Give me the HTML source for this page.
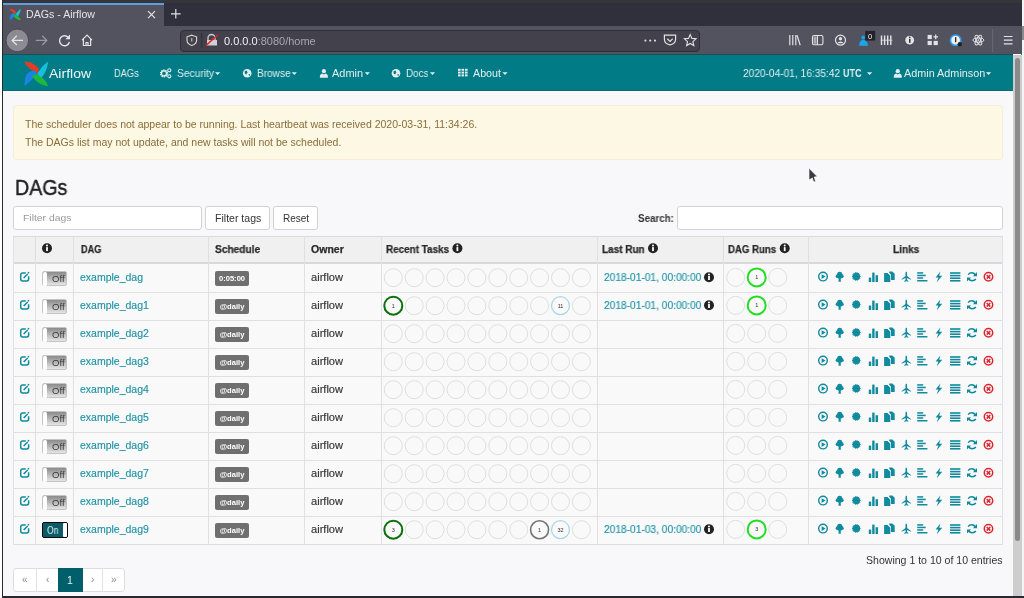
<!DOCTYPE html><html><head><meta charset="utf-8"><style>
*{box-sizing:border-box;margin:0;padding:0}
html,body{width:1024px;height:598px;overflow:hidden;background:#fff;font-family:"Liberation Sans",sans-serif;position:relative}
.a{position:absolute}
.nav{position:absolute;color:#e2eff1;font-size:10.5px;line-height:12px;top:67px;white-space:nowrap}
.alert{left:13px;top:105px;width:990px;height:55px;background:#fcf8e3;border:1px solid #f7eed5;border-radius:3px}
.alert p{position:absolute;left:11px;font-size:10.5px;color:#8a6d3b;line-height:12px;white-space:nowrap}
.input{background:#fff;border:1px solid #d2d2d4;border-radius:3px}
.btn{background:#fff;border:1px solid #d2d2d4;border-radius:3px;font-size:10.5px;color:#333;text-align:center;line-height:22px}
.hd{position:absolute;font-weight:bold;color:#333;font-size:9.9px;line-height:12px;top:244px;white-space:nowrap}
.t{position:absolute;font-size:10.5px;line-height:12px;white-space:nowrap}
svg{position:absolute;overflow:visible}
.a,.t,.nav,.hd,.alert p,.btn{will-change:transform}
</style></head><body>
<div class="a" style="left:1022px;top:0;width:2px;height:598px;background:#f4f4f4"></div>
<div class="a" style="left:1022px;top:26px;width:2px;height:14px;background:#8a8a90"></div>
<div class="a" style="left:1021px;top:54px;width:1px;height:542px;background:#6a6a6e"></div>
<div class="a" style="left:2px;top:0;width:1px;height:598px;background:#2a2a2e"></div>
<div class="a" style="left:3px;top:0;width:1019px;height:3px;background:#36353b"></div>
<div class="a" style="left:3px;top:3px;width:1019px;height:23px;background:#30303c"></div>
<div class="a" style="left:3px;top:3px;width:161px;height:23px;background:#53535f;border-top:2px solid #5b9fe0"></div>
<div class="a" style="left:3px;top:26px;width:1019px;height:28px;background:#53535f"></div>
<div class="a" style="left:180px;top:29.5px;width:520px;height:21.5px;background:#42414c;border:1px solid #2f2e37;border-radius:4px"></div>
<div class="a" style="left:3px;top:54px;width:1010px;height:37px;background:#017b86;border-top:1px solid #1f4c59;border-bottom:1px solid #0c6a73"></div>
<div class="a" style="left:3px;top:91px;width:1010px;height:505px;background:#f8f8fa"></div>
<div class="a" style="left:1013px;top:55px;width:9px;height:541px;background:#cdcdcd"></div>
<div class="a" style="left:1015px;top:58px;width:5px;height:483px;background:#8a8a8a;border-radius:3px"></div>
<div class="a" style="left:2px;top:596px;width:1022px;height:2px;background:#2a2a2e"></div>
<div class="t" style="left:25.90px;top:10.10px;font-size:10.4px;line-height:10.4px;color:#e4e4e8;transform:scaleX(1.0214);transform-origin:0 0;">DAGs - Airflow</div>
<div class="t" style="left:223.50px;top:36.50px;font-size:10.4px;line-height:10.4px;color:#f0f0f4;transform:scaleX(1.0582);transform-origin:0 0;">0.0.0.0<span style="color:#a8a8b0">:8080/home</span></div>
<div class="t" style="left:49.20px;top:67.53px;font-size:12.6px;line-height:12.6px;color:#eef8f8;transform:scaleX(1.1149);transform-origin:0 0;">Airflow</div>
<div class="t" style="left:113.60px;top:68.11px;font-size:10.5px;line-height:10.5px;color:#e2eff1;transform:scaleX(0.8857);transform-origin:0 0;">DAGs</div>
<div class="t" style="left:176.70px;top:68.11px;font-size:10.5px;line-height:10.5px;color:#e2eff1;transform:scaleX(0.9776);transform-origin:0 0;">Security</div>
<div class="t" style="left:257.00px;top:68.11px;font-size:10.5px;line-height:10.5px;color:#e2eff1;transform:scaleX(0.9600);transform-origin:0 0;">Browse</div>
<div class="t" style="left:332.20px;top:68.11px;font-size:10.5px;line-height:10.5px;color:#e2eff1;transform:scaleX(1.0454);transform-origin:0 0;">Admin</div>
<div class="t" style="left:406.30px;top:68.11px;font-size:10.5px;line-height:10.5px;color:#e2eff1;transform:scaleX(0.9372);transform-origin:0 0;">Docs</div>
<div class="t" style="left:473.00px;top:68.11px;font-size:10.5px;line-height:10.5px;color:#e2eff1;transform:scaleX(1.0200);transform-origin:0 0;">About</div>
<div class="t" style="left:742.90px;top:68.11px;font-size:10.5px;line-height:10.5px;color:#e2eff1;transform:scaleX(0.9671);transform-origin:0 0;">2020-04-01, 16:35:42</div>
<div class="t" style="left:903.70px;top:68.11px;font-size:10.5px;line-height:10.5px;color:#e2eff1;transform:scaleX(1.0317);transform-origin:0 0;">Admin Adminson</div>
<div class="t" style="left:843.40px;top:68.11px;font-size:10.5px;line-height:10.5px;color:#e2eff1;font-weight:bold;transform:scaleX(0.8611);transform-origin:0 0;">UTC</div>
<div class="a alert"></div>
<div class="t" style="left:24.80px;top:118.71px;font-size:10.5px;line-height:10.5px;color:#8a6d3b;">The scheduler does not appear to be running. Last heartbeat was received 2020-03-31, 11:34:26.</div>
<div class="t" style="left:24.80px;top:136.71px;font-size:10.5px;line-height:10.5px;color:#8a6d3b;">The DAGs list may not update, and new tasks will not be scheduled.</div>
<div class="t" style="left:14.60px;top:178.38px;font-size:21.4px;line-height:21.4px;color:#222;transform:scaleX(0.9185);transform-origin:0 0;-webkit-text-stroke:0.45px #222;">DAGs</div>
<div class="a input" style="left:13px;top:206px;width:189px;height:24px"></div>
<div class="t" style="left:22.90px;top:213.20px;font-size:9.8px;line-height:9.8px;color:#999;transform:scaleX(1.0579);transform-origin:0 0;">Filter dags</div>
<div class="a btn" style="left:205px;top:206px;width:65px;height:24px"></div>
<div class="t" style="left:214.60px;top:214.23px;font-size:10px;line-height:10px;color:#333;transform:scaleX(1.0547);transform-origin:0 0;">Filter tags</div>
<div class="a btn" style="left:273px;top:206px;width:45px;height:24px"></div>
<div class="t" style="left:282.80px;top:214.23px;font-size:10px;line-height:10px;color:#333;transform:scaleX(0.9847);transform-origin:0 0;">Reset</div>
<div class="t" style="left:637.70px;top:213.73px;font-size:10px;line-height:10px;color:#333;font-weight:bold;transform:scaleX(0.9782);transform-origin:0 0;">Search:</div>
<div class="a input" style="left:677px;top:206px;width:326px;height:24px"></div>
<div class="a" style="left:13px;top:236px;width:990px;height:27px;background:#f1f0f1"></div>
<div class="a" style="left:13px;top:263px;width:990px;height:282px;background:#f9f9fa"></div>
<div class="a" style="left:13px;top:236px;width:990px;height:1px;background:#dcdcde"></div>
<div class="a" style="left:13px;top:262px;width:990px;height:2px;background:#d8d8da"></div>
<div class="a" style="left:13px;top:292px;width:990px;height:1px;background:#e0e0e2"></div>
<div class="a" style="left:13px;top:320px;width:990px;height:1px;background:#e0e0e2"></div>
<div class="a" style="left:13px;top:348px;width:990px;height:1px;background:#e0e0e2"></div>
<div class="a" style="left:13px;top:376px;width:990px;height:1px;background:#e0e0e2"></div>
<div class="a" style="left:13px;top:404px;width:990px;height:1px;background:#e0e0e2"></div>
<div class="a" style="left:13px;top:432px;width:990px;height:1px;background:#e0e0e2"></div>
<div class="a" style="left:13px;top:460px;width:990px;height:1px;background:#e0e0e2"></div>
<div class="a" style="left:13px;top:488px;width:990px;height:1px;background:#e0e0e2"></div>
<div class="a" style="left:13px;top:516px;width:990px;height:1px;background:#e0e0e2"></div>
<div class="a" style="left:13px;top:544px;width:990px;height:1px;background:#dcdcde"></div>
<div class="a" style="left:13px;top:236px;width:1px;height:309px;background:#e0e0e2"></div>
<div class="a" style="left:35px;top:236px;width:1px;height:309px;background:#e0e0e2"></div>
<div class="a" style="left:73px;top:236px;width:1px;height:309px;background:#e0e0e2"></div>
<div class="a" style="left:208px;top:236px;width:1px;height:309px;background:#e0e0e2"></div>
<div class="a" style="left:304px;top:236px;width:1px;height:309px;background:#e0e0e2"></div>
<div class="a" style="left:381px;top:236px;width:1px;height:309px;background:#e0e0e2"></div>
<div class="a" style="left:597px;top:236px;width:1px;height:309px;background:#e0e0e2"></div>
<div class="a" style="left:723px;top:236px;width:1px;height:309px;background:#e0e0e2"></div>
<div class="a" style="left:808px;top:236px;width:1px;height:309px;background:#e0e0e2"></div>
<div class="a" style="left:1002px;top:236px;width:1px;height:309px;background:#e0e0e2"></div>
<div class="t" style="left:80.60px;top:245.10px;font-size:10.4px;line-height:10.4px;color:#2a2a2a;font-weight:bold;transform:scaleX(0.8831);transform-origin:0 0;-webkit-text-stroke:0.25px #2a2a2a;">DAG</div>
<div class="t" style="left:214.80px;top:245.10px;font-size:10.4px;line-height:10.4px;color:#2a2a2a;font-weight:bold;transform:scaleX(0.9773);transform-origin:0 0;-webkit-text-stroke:0.25px #2a2a2a;">Schedule</div>
<div class="t" style="left:311.00px;top:245.10px;font-size:10.4px;line-height:10.4px;color:#2a2a2a;font-weight:bold;transform:scaleX(1.0139);transform-origin:0 0;-webkit-text-stroke:0.25px #2a2a2a;">Owner</div>
<div class="t" style="left:385.70px;top:245.10px;font-size:10.4px;line-height:10.4px;color:#2a2a2a;font-weight:bold;transform:scaleX(0.9517);transform-origin:0 0;-webkit-text-stroke:0.25px #2a2a2a;">Recent Tasks</div>
<div class="t" style="left:602.00px;top:245.10px;font-size:10.4px;line-height:10.4px;color:#2a2a2a;font-weight:bold;transform:scaleX(0.9596);transform-origin:0 0;-webkit-text-stroke:0.25px #2a2a2a;">Last Run</div>
<div class="t" style="left:728.40px;top:245.10px;font-size:10.4px;line-height:10.4px;color:#2a2a2a;font-weight:bold;transform:scaleX(0.9250);transform-origin:0 0;-webkit-text-stroke:0.25px #2a2a2a;">DAG Runs</div>
<div class="t" style="left:892.70px;top:245.10px;font-size:10.4px;line-height:10.4px;color:#2a2a2a;font-weight:bold;transform:scaleX(0.9724);transform-origin:0 0;-webkit-text-stroke:0.25px #2a2a2a;">Links</div>
<div class="t" style="left:79.70px;top:271.91px;font-size:10.5px;line-height:10.5px;color:#1f93a4;-webkit-text-stroke:0.15px #1f93a4;">example_dag</div>
<div class="t" style="left:310.90px;top:271.91px;font-size:10.5px;line-height:10.5px;color:#333;transform:scaleX(1.0559);transform-origin:0 0;-webkit-text-stroke:0.15px #333;">airflow</div>
<div class="a" style="left:215px;top:271px;width:34px;height:15px;background:#6f6f6f;border-radius:2px;color:#fff;font-weight:bold;font-size:7.6px;line-height:15px;text-align:center">0:05:00</div>
<div class="a" style="left:42px;top:271px;width:25px;height:15px;background:linear-gradient(#8a8a8a,#b4b4b4 45%,#e4e4e4);border:1px solid #c4c4c4;border-radius:2px"></div>
<div class="a" style="left:42.5px;top:271.5px;width:4px;height:14px;background:#fff;border-radius:1.5px"></div>
<div class="t" style="left:52.40px;top:275.21px;font-size:9.2px;line-height:9.2px;color:#3a3a3a;transform:scaleX(1.0370);transform-origin:0 0;">Off</div>
<div class="t" style="left:604.00px;top:272.11px;font-size:10.5px;line-height:10.5px;color:#1f93a4;transform:scaleX(0.9701);transform-origin:0 0;-webkit-text-stroke:0.15px #1f93a4;">2018-01-01, 00:00:00</div>
<div class="t" style="left:79.70px;top:299.91px;font-size:10.5px;line-height:10.5px;color:#1f93a4;-webkit-text-stroke:0.15px #1f93a4;">example_dag1</div>
<div class="t" style="left:310.90px;top:299.91px;font-size:10.5px;line-height:10.5px;color:#333;transform:scaleX(1.0559);transform-origin:0 0;-webkit-text-stroke:0.15px #333;">airflow</div>
<div class="a" style="left:215px;top:299px;width:34px;height:15px;background:#6f6f6f;border-radius:2px;color:#fff;font-weight:bold;font-size:7.6px;line-height:15px;text-align:center">@daily</div>
<div class="a" style="left:42px;top:299px;width:25px;height:15px;background:linear-gradient(#8a8a8a,#b4b4b4 45%,#e4e4e4);border:1px solid #c4c4c4;border-radius:2px"></div>
<div class="a" style="left:42.5px;top:299.5px;width:4px;height:14px;background:#fff;border-radius:1.5px"></div>
<div class="t" style="left:52.40px;top:303.21px;font-size:9.2px;line-height:9.2px;color:#3a3a3a;transform:scaleX(1.0370);transform-origin:0 0;">Off</div>
<div class="t" style="left:604.00px;top:300.11px;font-size:10.5px;line-height:10.5px;color:#1f93a4;transform:scaleX(0.9701);transform-origin:0 0;-webkit-text-stroke:0.15px #1f93a4;">2018-01-01, 00:00:00</div>
<div class="t" style="left:79.70px;top:327.91px;font-size:10.5px;line-height:10.5px;color:#1f93a4;-webkit-text-stroke:0.15px #1f93a4;">example_dag2</div>
<div class="t" style="left:310.90px;top:327.91px;font-size:10.5px;line-height:10.5px;color:#333;transform:scaleX(1.0559);transform-origin:0 0;-webkit-text-stroke:0.15px #333;">airflow</div>
<div class="a" style="left:215px;top:327px;width:34px;height:15px;background:#6f6f6f;border-radius:2px;color:#fff;font-weight:bold;font-size:7.6px;line-height:15px;text-align:center">@daily</div>
<div class="a" style="left:42px;top:327px;width:25px;height:15px;background:linear-gradient(#8a8a8a,#b4b4b4 45%,#e4e4e4);border:1px solid #c4c4c4;border-radius:2px"></div>
<div class="a" style="left:42.5px;top:327.5px;width:4px;height:14px;background:#fff;border-radius:1.5px"></div>
<div class="t" style="left:52.40px;top:331.21px;font-size:9.2px;line-height:9.2px;color:#3a3a3a;transform:scaleX(1.0370);transform-origin:0 0;">Off</div>
<div class="t" style="left:79.70px;top:355.91px;font-size:10.5px;line-height:10.5px;color:#1f93a4;-webkit-text-stroke:0.15px #1f93a4;">example_dag3</div>
<div class="t" style="left:310.90px;top:355.91px;font-size:10.5px;line-height:10.5px;color:#333;transform:scaleX(1.0559);transform-origin:0 0;-webkit-text-stroke:0.15px #333;">airflow</div>
<div class="a" style="left:215px;top:355px;width:34px;height:15px;background:#6f6f6f;border-radius:2px;color:#fff;font-weight:bold;font-size:7.6px;line-height:15px;text-align:center">@daily</div>
<div class="a" style="left:42px;top:355px;width:25px;height:15px;background:linear-gradient(#8a8a8a,#b4b4b4 45%,#e4e4e4);border:1px solid #c4c4c4;border-radius:2px"></div>
<div class="a" style="left:42.5px;top:355.5px;width:4px;height:14px;background:#fff;border-radius:1.5px"></div>
<div class="t" style="left:52.40px;top:359.21px;font-size:9.2px;line-height:9.2px;color:#3a3a3a;transform:scaleX(1.0370);transform-origin:0 0;">Off</div>
<div class="t" style="left:79.70px;top:383.91px;font-size:10.5px;line-height:10.5px;color:#1f93a4;-webkit-text-stroke:0.15px #1f93a4;">example_dag4</div>
<div class="t" style="left:310.90px;top:383.91px;font-size:10.5px;line-height:10.5px;color:#333;transform:scaleX(1.0559);transform-origin:0 0;-webkit-text-stroke:0.15px #333;">airflow</div>
<div class="a" style="left:215px;top:383px;width:34px;height:15px;background:#6f6f6f;border-radius:2px;color:#fff;font-weight:bold;font-size:7.6px;line-height:15px;text-align:center">@daily</div>
<div class="a" style="left:42px;top:383px;width:25px;height:15px;background:linear-gradient(#8a8a8a,#b4b4b4 45%,#e4e4e4);border:1px solid #c4c4c4;border-radius:2px"></div>
<div class="a" style="left:42.5px;top:383.5px;width:4px;height:14px;background:#fff;border-radius:1.5px"></div>
<div class="t" style="left:52.40px;top:387.21px;font-size:9.2px;line-height:9.2px;color:#3a3a3a;transform:scaleX(1.0370);transform-origin:0 0;">Off</div>
<div class="t" style="left:79.70px;top:411.91px;font-size:10.5px;line-height:10.5px;color:#1f93a4;-webkit-text-stroke:0.15px #1f93a4;">example_dag5</div>
<div class="t" style="left:310.90px;top:411.91px;font-size:10.5px;line-height:10.5px;color:#333;transform:scaleX(1.0559);transform-origin:0 0;-webkit-text-stroke:0.15px #333;">airflow</div>
<div class="a" style="left:215px;top:411px;width:34px;height:15px;background:#6f6f6f;border-radius:2px;color:#fff;font-weight:bold;font-size:7.6px;line-height:15px;text-align:center">@daily</div>
<div class="a" style="left:42px;top:411px;width:25px;height:15px;background:linear-gradient(#8a8a8a,#b4b4b4 45%,#e4e4e4);border:1px solid #c4c4c4;border-radius:2px"></div>
<div class="a" style="left:42.5px;top:411.5px;width:4px;height:14px;background:#fff;border-radius:1.5px"></div>
<div class="t" style="left:52.40px;top:415.21px;font-size:9.2px;line-height:9.2px;color:#3a3a3a;transform:scaleX(1.0370);transform-origin:0 0;">Off</div>
<div class="t" style="left:79.70px;top:439.91px;font-size:10.5px;line-height:10.5px;color:#1f93a4;-webkit-text-stroke:0.15px #1f93a4;">example_dag6</div>
<div class="t" style="left:310.90px;top:439.91px;font-size:10.5px;line-height:10.5px;color:#333;transform:scaleX(1.0559);transform-origin:0 0;-webkit-text-stroke:0.15px #333;">airflow</div>
<div class="a" style="left:215px;top:439px;width:34px;height:15px;background:#6f6f6f;border-radius:2px;color:#fff;font-weight:bold;font-size:7.6px;line-height:15px;text-align:center">@daily</div>
<div class="a" style="left:42px;top:439px;width:25px;height:15px;background:linear-gradient(#8a8a8a,#b4b4b4 45%,#e4e4e4);border:1px solid #c4c4c4;border-radius:2px"></div>
<div class="a" style="left:42.5px;top:439.5px;width:4px;height:14px;background:#fff;border-radius:1.5px"></div>
<div class="t" style="left:52.40px;top:443.21px;font-size:9.2px;line-height:9.2px;color:#3a3a3a;transform:scaleX(1.0370);transform-origin:0 0;">Off</div>
<div class="t" style="left:79.70px;top:467.91px;font-size:10.5px;line-height:10.5px;color:#1f93a4;-webkit-text-stroke:0.15px #1f93a4;">example_dag7</div>
<div class="t" style="left:310.90px;top:467.91px;font-size:10.5px;line-height:10.5px;color:#333;transform:scaleX(1.0559);transform-origin:0 0;-webkit-text-stroke:0.15px #333;">airflow</div>
<div class="a" style="left:215px;top:467px;width:34px;height:15px;background:#6f6f6f;border-radius:2px;color:#fff;font-weight:bold;font-size:7.6px;line-height:15px;text-align:center">@daily</div>
<div class="a" style="left:42px;top:467px;width:25px;height:15px;background:linear-gradient(#8a8a8a,#b4b4b4 45%,#e4e4e4);border:1px solid #c4c4c4;border-radius:2px"></div>
<div class="a" style="left:42.5px;top:467.5px;width:4px;height:14px;background:#fff;border-radius:1.5px"></div>
<div class="t" style="left:52.40px;top:471.21px;font-size:9.2px;line-height:9.2px;color:#3a3a3a;transform:scaleX(1.0370);transform-origin:0 0;">Off</div>
<div class="t" style="left:79.70px;top:495.91px;font-size:10.5px;line-height:10.5px;color:#1f93a4;-webkit-text-stroke:0.15px #1f93a4;">example_dag8</div>
<div class="t" style="left:310.90px;top:495.91px;font-size:10.5px;line-height:10.5px;color:#333;transform:scaleX(1.0559);transform-origin:0 0;-webkit-text-stroke:0.15px #333;">airflow</div>
<div class="a" style="left:215px;top:495px;width:34px;height:15px;background:#6f6f6f;border-radius:2px;color:#fff;font-weight:bold;font-size:7.6px;line-height:15px;text-align:center">@daily</div>
<div class="a" style="left:42px;top:495px;width:25px;height:15px;background:linear-gradient(#8a8a8a,#b4b4b4 45%,#e4e4e4);border:1px solid #c4c4c4;border-radius:2px"></div>
<div class="a" style="left:42.5px;top:495.5px;width:4px;height:14px;background:#fff;border-radius:1.5px"></div>
<div class="t" style="left:52.40px;top:499.21px;font-size:9.2px;line-height:9.2px;color:#3a3a3a;transform:scaleX(1.0370);transform-origin:0 0;">Off</div>
<div class="t" style="left:79.70px;top:523.91px;font-size:10.5px;line-height:10.5px;color:#1f93a4;-webkit-text-stroke:0.15px #1f93a4;">example_dag9</div>
<div class="t" style="left:310.90px;top:523.91px;font-size:10.5px;line-height:10.5px;color:#333;transform:scaleX(1.0559);transform-origin:0 0;-webkit-text-stroke:0.15px #333;">airflow</div>
<div class="a" style="left:215px;top:523px;width:34px;height:15px;background:#6f6f6f;border-radius:2px;color:#fff;font-weight:bold;font-size:7.6px;line-height:15px;text-align:center">@daily</div>
<div class="a" style="left:42px;top:522px;width:26px;height:16px;background:#0c5c68;border:1px solid #0a0a0a;border-radius:2px"></div>
<div class="a" style="left:62.5px;top:523px;width:4px;height:14px;background:#fff;border-radius:1px"></div>
<div class="t" style="left:47.20px;top:525.93px;font-size:10px;line-height:10px;color:#d4f0f2;transform:scaleX(0.8614);transform-origin:0 0;">On</div>
<div class="t" style="left:604.00px;top:524.11px;font-size:10.5px;line-height:10.5px;color:#1f93a4;transform:scaleX(0.9701);transform-origin:0 0;-webkit-text-stroke:0.15px #1f93a4;">2018-01-03, 00:00:00</div>
<div class="t" style="left:866.20px;top:554.81px;font-size:10.5px;line-height:10.5px;color:#333;transform:scaleX(1.0044);transform-origin:0 0;">Showing 1 to 10 of 10 entries</div>
<div class="a" style="left:13px;top:568px;width:112px;height:24px;background:#fff;border:1px solid #dddddf;border-radius:3px"></div>
<div class="a" style="left:36px;top:568px;width:1px;height:24px;background:#e2e2e4"></div>
<div class="a" style="left:102px;top:568px;width:1px;height:24px;background:#e2e2e4"></div>
<div class="a" style="left:57.5px;top:568px;width:24.6px;height:24px;background:#005f6b"></div>
<div class="t" style="left:22.3px;top:574px;color:#888;font-size:10px">&laquo;</div>
<div class="t" style="left:45.5px;top:574px;color:#888;font-size:10px">&lsaquo;</div>
<div class="t" style="left:66.5px;top:574px;color:#e6f0f0;font-size:10.5px">1</div>
<div class="t" style="left:90.5px;top:574px;color:#888;font-size:10px">&rsaquo;</div>
<div class="t" style="left:111px;top:574px;color:#888;font-size:10px">&raquo;</div>
<svg width="1024" height="598" style="left:0;top:0"><g transform="translate(9.5,8.5) scale(0.47) translate(-24,-61)"><path d="M24.3 61.5L31 62.4Q35.5 64.2 39 68.8L38 73.5Q33 71.5 29 68Q25.5 65 24.3 61.5Z" fill="#e43b26"/><path d="M48.3 61.5Q47.5 66 46 70.5Q44 75 40.8 78.6L37.2 74Q39 70.5 42.5 66.5Q45.5 63.5 48.3 61.5Z" fill="#17c0da"/><path d="M24.5 85.8Q24.2 81 25.5 77Q27 73 30 71.5L35.2 70.6L36.6 73.2Q34 77.5 30.5 81Q27.5 84 24.5 85.8Z" fill="#1a84e6"/><path d="M48.2 86.2Q43 85.5 39.5 83.5Q35.5 81 32 76.2L36.2 74L43.2 78.6Q46.5 81.5 48.2 86.2Z" fill="#1cb840"/></g><path d="M148 11.2L155 18.2M155 11.2L148 18.2" stroke="#e2e2e8" stroke-width="1.2"/><path d="M175.8 9V18.6M171 13.8H180.6" stroke="#e2e2e8" stroke-width="1.2"/><circle cx="17.3" cy="40.4" r="11.3" fill="#8c8b94" stroke="#3f3e48" stroke-width="0.8"/><path d="M23 40.4H12.4M16.8 35.8L12.2 40.4L16.8 45" fill="none" stroke="#e2e2e8" stroke-width="1.3"/><path d="M35.8 40.4H46.6M42.2 35.8L46.8 40.4L42.2 45" fill="none" stroke="#9a99a2" stroke-width="1.3"/><path d="M68.6 37.8A5 5 0 1 0 69.4 42" fill="none" stroke="#e2e2e8" stroke-width="1.4"/><path d="M70 34.5V39.2H65.3Z" fill="#e2e2e8"/><path d="M82 40.2L87 35.2L92 40.2M83.4 39V45.5H90.6V39M86 45.5V42.5H88V45.5" fill="none" stroke="#e2e2e8" stroke-width="1.2"/><path d="M191.8 35.2L196.6 36.8V40.2C196.6 43 194.6 44.6 191.8 45.6C189 44.6 187 43 187 40.2V36.8Z" fill="none" stroke="#d8d8dc" stroke-width="1.1"/><rect x="191.3" y="38" width="1" height="3.6" fill="#d8d8dc"/><rect x="201.2" y="33" width="1" height="15" fill="#2f2e38"/><path d="M208 40V38A3.5 3.5 0 0 1 215 38V40" fill="none" stroke="#cfcfd6" stroke-width="1.3"/><rect x="207" y="40" width="10" height="5.5" fill="#cfcfd6"/><path d="M206 45.5L217.5 35" stroke="#e0262a" stroke-width="1.6"/><circle cx="645.4" cy="40.6" r="1.1" fill="#d8d8dc"/><circle cx="650.2" cy="40.6" r="1.1" fill="#d8d8dc"/><circle cx="655" cy="40.6" r="1.1" fill="#d8d8dc"/><path d="M664.4 35.2H675.6V39.2A5.6 5.6 0 0 1 664.4 39.2Z" fill="none" stroke="#e2e2e8" stroke-width="1.2"/><path d="M667.3 38.8L670 41.4L672.7 38.8" fill="none" stroke="#e2e2e8" stroke-width="1.2"/><path d="M690.2 34.6L691.9 38.4L696 38.8L692.9 41.6L693.8 45.6L690.2 43.5L686.6 45.6L687.5 41.6L684.4 38.8L688.5 38.4Z" fill="none" stroke="#e2e2e8" stroke-width="1.1"/><path d="M789.8 35V45.3M792.8 35V45.3M795.8 35V45.3M797 35.2L800.2 45.3" stroke="#e2e2e8" stroke-width="1.2"/><rect x="812.5" y="35.5" width="10.4" height="9.3" rx="1.5" fill="none" stroke="#e2e2e8" stroke-width="1.1"/><path d="M817.4 35.5V44.8" stroke="#e2e2e8" stroke-width="1.1"/><rect x="813.5" y="36.5" width="3" height="7.3" fill="#aaaab0"/><circle cx="840.5" cy="40.2" r="5" fill="none" stroke="#e2e2e8" stroke-width="1.2"/><circle cx="840.5" cy="38.8" r="1.7" fill="#e2e2e8"/><path d="M837.3 43.2A3.4 2.6 0 0 1 843.7 43.2" fill="#e2e2e8"/><circle cx="863.3" cy="37.6" r="2" fill="#1c9ef0"/><path d="M859.2 45.8Q859.2 40.2 863.3 39.8Q867.6 40.2 868 45.8Z" fill="#1aa6e8"/><rect x="865.2" y="30.9" width="10" height="9.7" fill="#24232c"/><text x="870.2" y="38.8" font-size="7.5" text-anchor="middle" fill="#f0f0f0" font-family="Liberation Sans">0</text><path d="M881.5 35.6V45M884.6 35.6V45M887.7 35.6V45M890.8 35.6V45" stroke="#e2e2e8" stroke-width="1.4"/><path d="M880.7 40.2H892.4" stroke="#e2e2e8" stroke-width="0.8"/><circle cx="909.7" cy="40.2" r="4.8" fill="#e2e2e8" stroke="#2d2c35" stroke-width="0.6"/><rect x="909" y="38.8" width="1.5" height="4" fill="#333"/><circle cx="909.8" cy="37.4" r="0.8" fill="#333"/><rect x="927.6" y="34.9" width="4.2" height="4.2" fill="#e2e2e8"/><rect x="927.6" y="40.9" width="4.2" height="4.2" fill="#e2e2e8"/><rect x="933.6" y="40.9" width="4.2" height="4.2" fill="#e2e2e8"/><path d="M935.7 34.6V39.2M933.4 36.9H938" stroke="#e2e2e8" stroke-width="1.3"/><circle cx="955.6" cy="40.2" r="5.2" fill="#f0f0f0" stroke="#2c9ef0" stroke-width="1.6"/><rect x="955" y="37.2" width="1.3" height="5" fill="#222"/><circle cx="959.8" cy="44.2" r="2.2" fill="#222"/><g fill="none" stroke="#e2e2e8" stroke-width="1"><ellipse cx="978.4" cy="40.1" rx="5.4" ry="2.1"/><ellipse cx="978.4" cy="40.1" rx="5.4" ry="2.1" transform="rotate(60 978.4 40.1)"/><ellipse cx="978.4" cy="40.1" rx="5.4" ry="2.1" transform="rotate(-60 978.4 40.1)"/></g><circle cx="978.4" cy="40.1" r="0.9" fill="#e2e2e8"/><rect x="992.2" y="29" width="1" height="23" fill="#6a6974"/><path d="M1003.8 36.5H1012.5M1003.8 40.2H1012.5M1003.8 43.9H1012.5" stroke="#e2e2e8" stroke-width="1.2"/><g transform="translate(24,61) scale(1.0) translate(-24,-61)"><path d="M24.3 61.5L31 62.4Q35.5 64.2 39 68.8L38 73.5Q33 71.5 29 68Q25.5 65 24.3 61.5Z" fill="#e43b26"/><path d="M48.3 61.5Q47.5 66 46 70.5Q44 75 40.8 78.6L37.2 74Q39 70.5 42.5 66.5Q45.5 63.5 48.3 61.5Z" fill="#17c0da"/><path d="M24.5 85.8Q24.2 81 25.5 77Q27 73 30 71.5L35.2 70.6L36.6 73.2Q34 77.5 30.5 81Q27.5 84 24.5 85.8Z" fill="#1a84e6"/><path d="M48.2 86.2Q43 85.5 39.5 83.5Q35.5 81 32 76.2L36.2 74L43.2 78.6Q46.5 81.5 48.2 86.2Z" fill="#1cb840"/></g><circle cx="164" cy="73.4" r="3.2" fill="none" stroke="#e2eff1" stroke-width="1.8" stroke-dasharray="1.2 0.8"/><circle cx="164" cy="73.4" r="2.5" fill="none" stroke="#e2eff1" stroke-width="1.3"/><circle cx="169.3" cy="70.3" r="1.6" fill="none" stroke="#e2eff1" stroke-width="1.1"/><circle cx="169.3" cy="76.3" r="1.6" fill="none" stroke="#e2eff1" stroke-width="1.1"/><circle cx="247.2" cy="73.3" r="4.3" fill="#e2eff1"/><path d="M244.7 71.2L246.6 70.4L247.6 72.6L246.2 74.6L244.79999999999998 73.4Z M248.39999999999998 74.6L250.2 74L249.39999999999998 76.6Z" fill="#017b86"/><circle cx="396" cy="73.3" r="4.3" fill="#e2eff1"/><path d="M393.5 71.2L395.4 70.4L396.4 72.6L395 74.6L393.6 73.4Z M397.2 74.6L399 74L398.2 76.6Z" fill="#017b86"/><circle cx="323.9" cy="71.2" r="2.1" fill="#e2eff1"/><path d="M319.9 77.8V76.2C319.9 74.4 321.4 73.6 322.29999999999995 73.4L323.9 74.6L325.5 73.4C326.4 73.6 327.9 74.4 327.9 76.2V77.8Z" fill="#e2eff1"/><circle cx="897.8" cy="71.2" r="2.1" fill="#e2eff1"/><path d="M893.8 77.8V76.2C893.8 74.4 895.3 73.6 896.1999999999999 73.4L897.8 74.6L899.4 73.4C900.3 73.6 901.8 74.4 901.8 76.2V77.8Z" fill="#e2eff1"/><rect x="458.0" y="68.8" width="2.6" height="2" fill="#e2eff1"/><rect x="461.5" y="68.8" width="2.6" height="2" fill="#e2eff1"/><rect x="465.0" y="68.8" width="2.6" height="2" fill="#e2eff1"/><rect x="458.0" y="71.6" width="2.6" height="2" fill="#e2eff1"/><rect x="461.5" y="71.6" width="2.6" height="2" fill="#e2eff1"/><rect x="465.0" y="71.6" width="2.6" height="2" fill="#e2eff1"/><rect x="458.0" y="74.4" width="2.6" height="2" fill="#e2eff1"/><rect x="461.5" y="74.4" width="2.6" height="2" fill="#e2eff1"/><rect x="465.0" y="74.4" width="2.6" height="2" fill="#e2eff1"/><path d="M215.0 72.2H220.2L217.6 74.9Z" fill="#e2eff1"/><path d="M291.7 72.2H296.90000000000003L294.3 74.9Z" fill="#e2eff1"/><path d="M364.7 72.2H369.90000000000003L367.3 74.9Z" fill="#e2eff1"/><path d="M429.9 72.2H435.1L432.5 74.9Z" fill="#e2eff1"/><path d="M502.4 72.2H507.6L505 74.9Z" fill="#e2eff1"/><path d="M867.0 72.2H872.2L869.6 74.9Z" fill="#e2eff1"/><path d="M985.9 72.2H991.1L988.5 74.9Z" fill="#e2eff1"/></svg>
<svg width="1024" height="598" style="left:0;top:0"><circle cx="47" cy="248.3" r="5" fill="#222"/><rect x="46.1" y="247.10000000000002" width="1.8" height="4" fill="#fff"/><circle cx="47" cy="245.5" r="1" fill="#fff"/><circle cx="457.4" cy="248.3" r="5" fill="#222"/><rect x="456.5" y="247.10000000000002" width="1.8" height="4" fill="#fff"/><circle cx="457.4" cy="245.5" r="1" fill="#fff"/><circle cx="653" cy="248.3" r="5" fill="#222"/><rect x="652.1" y="247.10000000000002" width="1.8" height="4" fill="#fff"/><circle cx="653" cy="245.5" r="1" fill="#fff"/><circle cx="784.7" cy="248.3" r="5" fill="#222"/><rect x="783.8000000000001" y="247.10000000000002" width="1.8" height="4" fill="#fff"/><circle cx="784.7" cy="245.5" r="1" fill="#fff"/><g transform="translate(19.8,271.9) scale(0.92)"><path d="M6.5 1.2H3A2 2 0 0 0 1 3.2V7.8A2 2 0 0 0 3 9.8H7.6A2 2 0 0 0 9.6 7.8V4.6" fill="none" stroke="#108a9d" stroke-width="1.6"/><path d="M4.2 6.6L8.6 2.2" stroke="#108a9d" stroke-width="1.6"/><rect x="8.5" y="0" width="1.7" height="1.7" fill="#108a9d"/></g><circle cx="393.3" cy="277.7" r="9" fill="none" stroke="#dedede" stroke-width="1"/><circle cx="414.2" cy="277.7" r="9" fill="none" stroke="#dedede" stroke-width="1"/><circle cx="435.1" cy="277.7" r="9" fill="none" stroke="#dedede" stroke-width="1"/><circle cx="456.0" cy="277.7" r="9" fill="none" stroke="#dedede" stroke-width="1"/><circle cx="476.9" cy="277.7" r="9" fill="none" stroke="#dedede" stroke-width="1"/><circle cx="497.8" cy="277.7" r="9" fill="none" stroke="#dedede" stroke-width="1"/><circle cx="518.7" cy="277.7" r="9" fill="none" stroke="#dedede" stroke-width="1"/><circle cx="539.6" cy="277.7" r="9" fill="none" stroke="#dedede" stroke-width="1"/><circle cx="560.5" cy="277.7" r="9" fill="none" stroke="#dedede" stroke-width="1"/><circle cx="581.4" cy="277.7" r="9" fill="none" stroke="#dedede" stroke-width="1"/><circle cx="735.7" cy="277.4" r="9" fill="none" stroke="#dedede" stroke-width="1"/><circle cx="756.7" cy="277.4" r="9" fill="none" stroke="#22dd22" stroke-width="2"/><text x="756.7" y="279.4" font-size="5.5" text-anchor="middle" fill="#333" font-family="Liberation Sans">1</text><circle cx="777.7" cy="277.4" r="9" fill="none" stroke="#dedede" stroke-width="1"/><circle cx="709" cy="277.2" r="5" fill="#222"/><rect x="708.1" y="276.0" width="1.8" height="4" fill="#fff"/><circle cx="709" cy="274.4" r="1" fill="#fff"/><g transform="translate(0,271.6)" fill="#108a9d"><circle cx="823" cy="5" r="4.3" fill="none" stroke="#108a9d" stroke-width="1.4"/><path d="M821.6 2.6L825.6 5L821.6 7.4Z"/><circle cx="839.7" cy="2.8" r="2.6"/><circle cx="837.6" cy="4.6" r="1.9"/><circle cx="841.8" cy="4.6" r="1.9"/><circle cx="839.7" cy="5.2" r="2.3"/><path d="M838.8 6.5H840.6L840.9 10.1H838.5Z"/><polygon points="860.90,4.80 859.81,5.60 860.44,6.80 859.11,7.04 859.17,8.40 857.86,8.04 857.32,9.28 856.30,8.40 855.28,9.28 854.74,8.04 853.43,8.40 853.49,7.04 852.16,6.80 852.79,5.60 851.70,4.80 852.79,4.00 852.16,2.80 853.49,2.56 853.43,1.20 854.74,1.56 855.28,0.32 856.30,1.20 857.32,0.32 857.86,1.56 859.17,1.20 859.11,2.56 860.44,2.80 859.81,4.00"/><rect x="868.8" y="6" width="2.4" height="4.4"/><rect x="872.2" y="1" width="2.4" height="9.4"/><rect x="875.6" y="3.6" width="2.4" height="6.8"/><path d="M884.1 1.4H887.6L890.3 4.1V10.3H884.1Z"/><path d="M888.2 1.2L889.6 2.6" stroke="#f9f9fa" stroke-width="0.8"/><path d="M889.2 -0.2H892.3L894.7 2.2V8.4H891V3.2L889.2 1.2Z"/><path d="M906.3 0.2C906.9 0.2 907.1 0.9 907.1 1.6V4.4L910.9 7.3V8.1L907.1 6.5V8.4L908.4 9.5V10.2L906.3 9.6L904.2 10.2V9.5L905.5 8.4V6.5L901.7 8.1V7.3L905.5 4.4V1.6C905.5 0.9 905.7 0.2 906.3 0.2Z"/><rect x="917.2" y="0.6" width="6" height="1.5"/><rect x="917.2" y="3.1" width="8.5" height="1.5"/><rect x="917.2" y="5.6" width="6" height="1.5"/><rect x="917.2" y="8.4" width="10.2" height="1.5"/><path d="M940.4 0L935.6 6H938.4L936.8 10.6L942.2 4.2H939.2Z"/><rect x="950" y="0.6" width="10.4" height="1.6"/><rect x="950" y="3.2" width="10.4" height="1.6"/><rect x="950" y="5.8" width="10.4" height="1.6"/><rect x="950" y="8.4" width="10.4" height="1.6"/><path d="M975.3 3.2A4.3 4.3 0 0 0 968.2 3" fill="none" stroke="#108a9d" stroke-width="1.6"/><path d="M977 0.5V4.6H972.9Z"/><path d="M968.7 7.2A4.3 4.3 0 0 0 975.8 7.4" fill="none" stroke="#108a9d" stroke-width="1.6"/><path d="M967 9.9V5.8H971.1Z"/><circle cx="988.5" cy="5.2" r="4.2" fill="none" stroke="#d9262c" stroke-width="1.5"/><path d="M986.7 3.4L990.3 7M990.3 3.4L986.7 7" stroke="#d9262c" stroke-width="1.5"/></g><g transform="translate(19.8,299.9) scale(0.92)"><path d="M6.5 1.2H3A2 2 0 0 0 1 3.2V7.8A2 2 0 0 0 3 9.8H7.6A2 2 0 0 0 9.6 7.8V4.6" fill="none" stroke="#108a9d" stroke-width="1.6"/><path d="M4.2 6.6L8.6 2.2" stroke="#108a9d" stroke-width="1.6"/><rect x="8.5" y="0" width="1.7" height="1.7" fill="#108a9d"/></g><circle cx="393.3" cy="305.7" r="9" fill="none" stroke="#0b6f0b" stroke-width="2"/><text x="393.3" y="307.7" font-size="5.5" text-anchor="middle" fill="#333" font-family="Liberation Sans">1</text><circle cx="414.2" cy="305.7" r="9" fill="none" stroke="#dedede" stroke-width="1"/><circle cx="435.1" cy="305.7" r="9" fill="none" stroke="#dedede" stroke-width="1"/><circle cx="456.0" cy="305.7" r="9" fill="none" stroke="#dedede" stroke-width="1"/><circle cx="476.9" cy="305.7" r="9" fill="none" stroke="#dedede" stroke-width="1"/><circle cx="497.8" cy="305.7" r="9" fill="none" stroke="#dedede" stroke-width="1"/><circle cx="518.7" cy="305.7" r="9" fill="none" stroke="#dedede" stroke-width="1"/><circle cx="539.6" cy="305.7" r="9" fill="none" stroke="#dedede" stroke-width="1"/><circle cx="560.5" cy="305.7" r="9" fill="none" stroke="#a8d8e6" stroke-width="1.3"/><text x="560.5" y="307.7" font-size="5.5" text-anchor="middle" fill="#333" font-family="Liberation Sans">11</text><circle cx="581.4" cy="305.7" r="9" fill="none" stroke="#dedede" stroke-width="1"/><circle cx="735.7" cy="305.4" r="9" fill="none" stroke="#dedede" stroke-width="1"/><circle cx="756.7" cy="305.4" r="9" fill="none" stroke="#22dd22" stroke-width="2"/><text x="756.7" y="307.4" font-size="5.5" text-anchor="middle" fill="#333" font-family="Liberation Sans">1</text><circle cx="777.7" cy="305.4" r="9" fill="none" stroke="#dedede" stroke-width="1"/><circle cx="709" cy="305.2" r="5" fill="#222"/><rect x="708.1" y="304.0" width="1.8" height="4" fill="#fff"/><circle cx="709" cy="302.4" r="1" fill="#fff"/><g transform="translate(0,299.6)" fill="#108a9d"><circle cx="823" cy="5" r="4.3" fill="none" stroke="#108a9d" stroke-width="1.4"/><path d="M821.6 2.6L825.6 5L821.6 7.4Z"/><circle cx="839.7" cy="2.8" r="2.6"/><circle cx="837.6" cy="4.6" r="1.9"/><circle cx="841.8" cy="4.6" r="1.9"/><circle cx="839.7" cy="5.2" r="2.3"/><path d="M838.8 6.5H840.6L840.9 10.1H838.5Z"/><polygon points="860.90,4.80 859.81,5.60 860.44,6.80 859.11,7.04 859.17,8.40 857.86,8.04 857.32,9.28 856.30,8.40 855.28,9.28 854.74,8.04 853.43,8.40 853.49,7.04 852.16,6.80 852.79,5.60 851.70,4.80 852.79,4.00 852.16,2.80 853.49,2.56 853.43,1.20 854.74,1.56 855.28,0.32 856.30,1.20 857.32,0.32 857.86,1.56 859.17,1.20 859.11,2.56 860.44,2.80 859.81,4.00"/><rect x="868.8" y="6" width="2.4" height="4.4"/><rect x="872.2" y="1" width="2.4" height="9.4"/><rect x="875.6" y="3.6" width="2.4" height="6.8"/><path d="M884.1 1.4H887.6L890.3 4.1V10.3H884.1Z"/><path d="M888.2 1.2L889.6 2.6" stroke="#f9f9fa" stroke-width="0.8"/><path d="M889.2 -0.2H892.3L894.7 2.2V8.4H891V3.2L889.2 1.2Z"/><path d="M906.3 0.2C906.9 0.2 907.1 0.9 907.1 1.6V4.4L910.9 7.3V8.1L907.1 6.5V8.4L908.4 9.5V10.2L906.3 9.6L904.2 10.2V9.5L905.5 8.4V6.5L901.7 8.1V7.3L905.5 4.4V1.6C905.5 0.9 905.7 0.2 906.3 0.2Z"/><rect x="917.2" y="0.6" width="6" height="1.5"/><rect x="917.2" y="3.1" width="8.5" height="1.5"/><rect x="917.2" y="5.6" width="6" height="1.5"/><rect x="917.2" y="8.4" width="10.2" height="1.5"/><path d="M940.4 0L935.6 6H938.4L936.8 10.6L942.2 4.2H939.2Z"/><rect x="950" y="0.6" width="10.4" height="1.6"/><rect x="950" y="3.2" width="10.4" height="1.6"/><rect x="950" y="5.8" width="10.4" height="1.6"/><rect x="950" y="8.4" width="10.4" height="1.6"/><path d="M975.3 3.2A4.3 4.3 0 0 0 968.2 3" fill="none" stroke="#108a9d" stroke-width="1.6"/><path d="M977 0.5V4.6H972.9Z"/><path d="M968.7 7.2A4.3 4.3 0 0 0 975.8 7.4" fill="none" stroke="#108a9d" stroke-width="1.6"/><path d="M967 9.9V5.8H971.1Z"/><circle cx="988.5" cy="5.2" r="4.2" fill="none" stroke="#d9262c" stroke-width="1.5"/><path d="M986.7 3.4L990.3 7M990.3 3.4L986.7 7" stroke="#d9262c" stroke-width="1.5"/></g><g transform="translate(19.8,327.9) scale(0.92)"><path d="M6.5 1.2H3A2 2 0 0 0 1 3.2V7.8A2 2 0 0 0 3 9.8H7.6A2 2 0 0 0 9.6 7.8V4.6" fill="none" stroke="#108a9d" stroke-width="1.6"/><path d="M4.2 6.6L8.6 2.2" stroke="#108a9d" stroke-width="1.6"/><rect x="8.5" y="0" width="1.7" height="1.7" fill="#108a9d"/></g><circle cx="393.3" cy="333.7" r="9" fill="none" stroke="#dedede" stroke-width="1"/><circle cx="414.2" cy="333.7" r="9" fill="none" stroke="#dedede" stroke-width="1"/><circle cx="435.1" cy="333.7" r="9" fill="none" stroke="#dedede" stroke-width="1"/><circle cx="456.0" cy="333.7" r="9" fill="none" stroke="#dedede" stroke-width="1"/><circle cx="476.9" cy="333.7" r="9" fill="none" stroke="#dedede" stroke-width="1"/><circle cx="497.8" cy="333.7" r="9" fill="none" stroke="#dedede" stroke-width="1"/><circle cx="518.7" cy="333.7" r="9" fill="none" stroke="#dedede" stroke-width="1"/><circle cx="539.6" cy="333.7" r="9" fill="none" stroke="#dedede" stroke-width="1"/><circle cx="560.5" cy="333.7" r="9" fill="none" stroke="#dedede" stroke-width="1"/><circle cx="581.4" cy="333.7" r="9" fill="none" stroke="#dedede" stroke-width="1"/><circle cx="735.7" cy="333.4" r="9" fill="none" stroke="#dedede" stroke-width="1"/><circle cx="756.7" cy="333.4" r="9" fill="none" stroke="#dedede" stroke-width="1"/><circle cx="777.7" cy="333.4" r="9" fill="none" stroke="#dedede" stroke-width="1"/><g transform="translate(0,327.6)" fill="#108a9d"><circle cx="823" cy="5" r="4.3" fill="none" stroke="#108a9d" stroke-width="1.4"/><path d="M821.6 2.6L825.6 5L821.6 7.4Z"/><circle cx="839.7" cy="2.8" r="2.6"/><circle cx="837.6" cy="4.6" r="1.9"/><circle cx="841.8" cy="4.6" r="1.9"/><circle cx="839.7" cy="5.2" r="2.3"/><path d="M838.8 6.5H840.6L840.9 10.1H838.5Z"/><polygon points="860.90,4.80 859.81,5.60 860.44,6.80 859.11,7.04 859.17,8.40 857.86,8.04 857.32,9.28 856.30,8.40 855.28,9.28 854.74,8.04 853.43,8.40 853.49,7.04 852.16,6.80 852.79,5.60 851.70,4.80 852.79,4.00 852.16,2.80 853.49,2.56 853.43,1.20 854.74,1.56 855.28,0.32 856.30,1.20 857.32,0.32 857.86,1.56 859.17,1.20 859.11,2.56 860.44,2.80 859.81,4.00"/><rect x="868.8" y="6" width="2.4" height="4.4"/><rect x="872.2" y="1" width="2.4" height="9.4"/><rect x="875.6" y="3.6" width="2.4" height="6.8"/><path d="M884.1 1.4H887.6L890.3 4.1V10.3H884.1Z"/><path d="M888.2 1.2L889.6 2.6" stroke="#f9f9fa" stroke-width="0.8"/><path d="M889.2 -0.2H892.3L894.7 2.2V8.4H891V3.2L889.2 1.2Z"/><path d="M906.3 0.2C906.9 0.2 907.1 0.9 907.1 1.6V4.4L910.9 7.3V8.1L907.1 6.5V8.4L908.4 9.5V10.2L906.3 9.6L904.2 10.2V9.5L905.5 8.4V6.5L901.7 8.1V7.3L905.5 4.4V1.6C905.5 0.9 905.7 0.2 906.3 0.2Z"/><rect x="917.2" y="0.6" width="6" height="1.5"/><rect x="917.2" y="3.1" width="8.5" height="1.5"/><rect x="917.2" y="5.6" width="6" height="1.5"/><rect x="917.2" y="8.4" width="10.2" height="1.5"/><path d="M940.4 0L935.6 6H938.4L936.8 10.6L942.2 4.2H939.2Z"/><rect x="950" y="0.6" width="10.4" height="1.6"/><rect x="950" y="3.2" width="10.4" height="1.6"/><rect x="950" y="5.8" width="10.4" height="1.6"/><rect x="950" y="8.4" width="10.4" height="1.6"/><path d="M975.3 3.2A4.3 4.3 0 0 0 968.2 3" fill="none" stroke="#108a9d" stroke-width="1.6"/><path d="M977 0.5V4.6H972.9Z"/><path d="M968.7 7.2A4.3 4.3 0 0 0 975.8 7.4" fill="none" stroke="#108a9d" stroke-width="1.6"/><path d="M967 9.9V5.8H971.1Z"/><circle cx="988.5" cy="5.2" r="4.2" fill="none" stroke="#d9262c" stroke-width="1.5"/><path d="M986.7 3.4L990.3 7M990.3 3.4L986.7 7" stroke="#d9262c" stroke-width="1.5"/></g><g transform="translate(19.8,355.9) scale(0.92)"><path d="M6.5 1.2H3A2 2 0 0 0 1 3.2V7.8A2 2 0 0 0 3 9.8H7.6A2 2 0 0 0 9.6 7.8V4.6" fill="none" stroke="#108a9d" stroke-width="1.6"/><path d="M4.2 6.6L8.6 2.2" stroke="#108a9d" stroke-width="1.6"/><rect x="8.5" y="0" width="1.7" height="1.7" fill="#108a9d"/></g><circle cx="393.3" cy="361.7" r="9" fill="none" stroke="#dedede" stroke-width="1"/><circle cx="414.2" cy="361.7" r="9" fill="none" stroke="#dedede" stroke-width="1"/><circle cx="435.1" cy="361.7" r="9" fill="none" stroke="#dedede" stroke-width="1"/><circle cx="456.0" cy="361.7" r="9" fill="none" stroke="#dedede" stroke-width="1"/><circle cx="476.9" cy="361.7" r="9" fill="none" stroke="#dedede" stroke-width="1"/><circle cx="497.8" cy="361.7" r="9" fill="none" stroke="#dedede" stroke-width="1"/><circle cx="518.7" cy="361.7" r="9" fill="none" stroke="#dedede" stroke-width="1"/><circle cx="539.6" cy="361.7" r="9" fill="none" stroke="#dedede" stroke-width="1"/><circle cx="560.5" cy="361.7" r="9" fill="none" stroke="#dedede" stroke-width="1"/><circle cx="581.4" cy="361.7" r="9" fill="none" stroke="#dedede" stroke-width="1"/><circle cx="735.7" cy="361.4" r="9" fill="none" stroke="#dedede" stroke-width="1"/><circle cx="756.7" cy="361.4" r="9" fill="none" stroke="#dedede" stroke-width="1"/><circle cx="777.7" cy="361.4" r="9" fill="none" stroke="#dedede" stroke-width="1"/><g transform="translate(0,355.6)" fill="#108a9d"><circle cx="823" cy="5" r="4.3" fill="none" stroke="#108a9d" stroke-width="1.4"/><path d="M821.6 2.6L825.6 5L821.6 7.4Z"/><circle cx="839.7" cy="2.8" r="2.6"/><circle cx="837.6" cy="4.6" r="1.9"/><circle cx="841.8" cy="4.6" r="1.9"/><circle cx="839.7" cy="5.2" r="2.3"/><path d="M838.8 6.5H840.6L840.9 10.1H838.5Z"/><polygon points="860.90,4.80 859.81,5.60 860.44,6.80 859.11,7.04 859.17,8.40 857.86,8.04 857.32,9.28 856.30,8.40 855.28,9.28 854.74,8.04 853.43,8.40 853.49,7.04 852.16,6.80 852.79,5.60 851.70,4.80 852.79,4.00 852.16,2.80 853.49,2.56 853.43,1.20 854.74,1.56 855.28,0.32 856.30,1.20 857.32,0.32 857.86,1.56 859.17,1.20 859.11,2.56 860.44,2.80 859.81,4.00"/><rect x="868.8" y="6" width="2.4" height="4.4"/><rect x="872.2" y="1" width="2.4" height="9.4"/><rect x="875.6" y="3.6" width="2.4" height="6.8"/><path d="M884.1 1.4H887.6L890.3 4.1V10.3H884.1Z"/><path d="M888.2 1.2L889.6 2.6" stroke="#f9f9fa" stroke-width="0.8"/><path d="M889.2 -0.2H892.3L894.7 2.2V8.4H891V3.2L889.2 1.2Z"/><path d="M906.3 0.2C906.9 0.2 907.1 0.9 907.1 1.6V4.4L910.9 7.3V8.1L907.1 6.5V8.4L908.4 9.5V10.2L906.3 9.6L904.2 10.2V9.5L905.5 8.4V6.5L901.7 8.1V7.3L905.5 4.4V1.6C905.5 0.9 905.7 0.2 906.3 0.2Z"/><rect x="917.2" y="0.6" width="6" height="1.5"/><rect x="917.2" y="3.1" width="8.5" height="1.5"/><rect x="917.2" y="5.6" width="6" height="1.5"/><rect x="917.2" y="8.4" width="10.2" height="1.5"/><path d="M940.4 0L935.6 6H938.4L936.8 10.6L942.2 4.2H939.2Z"/><rect x="950" y="0.6" width="10.4" height="1.6"/><rect x="950" y="3.2" width="10.4" height="1.6"/><rect x="950" y="5.8" width="10.4" height="1.6"/><rect x="950" y="8.4" width="10.4" height="1.6"/><path d="M975.3 3.2A4.3 4.3 0 0 0 968.2 3" fill="none" stroke="#108a9d" stroke-width="1.6"/><path d="M977 0.5V4.6H972.9Z"/><path d="M968.7 7.2A4.3 4.3 0 0 0 975.8 7.4" fill="none" stroke="#108a9d" stroke-width="1.6"/><path d="M967 9.9V5.8H971.1Z"/><circle cx="988.5" cy="5.2" r="4.2" fill="none" stroke="#d9262c" stroke-width="1.5"/><path d="M986.7 3.4L990.3 7M990.3 3.4L986.7 7" stroke="#d9262c" stroke-width="1.5"/></g><g transform="translate(19.8,383.9) scale(0.92)"><path d="M6.5 1.2H3A2 2 0 0 0 1 3.2V7.8A2 2 0 0 0 3 9.8H7.6A2 2 0 0 0 9.6 7.8V4.6" fill="none" stroke="#108a9d" stroke-width="1.6"/><path d="M4.2 6.6L8.6 2.2" stroke="#108a9d" stroke-width="1.6"/><rect x="8.5" y="0" width="1.7" height="1.7" fill="#108a9d"/></g><circle cx="393.3" cy="389.7" r="9" fill="none" stroke="#dedede" stroke-width="1"/><circle cx="414.2" cy="389.7" r="9" fill="none" stroke="#dedede" stroke-width="1"/><circle cx="435.1" cy="389.7" r="9" fill="none" stroke="#dedede" stroke-width="1"/><circle cx="456.0" cy="389.7" r="9" fill="none" stroke="#dedede" stroke-width="1"/><circle cx="476.9" cy="389.7" r="9" fill="none" stroke="#dedede" stroke-width="1"/><circle cx="497.8" cy="389.7" r="9" fill="none" stroke="#dedede" stroke-width="1"/><circle cx="518.7" cy="389.7" r="9" fill="none" stroke="#dedede" stroke-width="1"/><circle cx="539.6" cy="389.7" r="9" fill="none" stroke="#dedede" stroke-width="1"/><circle cx="560.5" cy="389.7" r="9" fill="none" stroke="#dedede" stroke-width="1"/><circle cx="581.4" cy="389.7" r="9" fill="none" stroke="#dedede" stroke-width="1"/><circle cx="735.7" cy="389.4" r="9" fill="none" stroke="#dedede" stroke-width="1"/><circle cx="756.7" cy="389.4" r="9" fill="none" stroke="#dedede" stroke-width="1"/><circle cx="777.7" cy="389.4" r="9" fill="none" stroke="#dedede" stroke-width="1"/><g transform="translate(0,383.6)" fill="#108a9d"><circle cx="823" cy="5" r="4.3" fill="none" stroke="#108a9d" stroke-width="1.4"/><path d="M821.6 2.6L825.6 5L821.6 7.4Z"/><circle cx="839.7" cy="2.8" r="2.6"/><circle cx="837.6" cy="4.6" r="1.9"/><circle cx="841.8" cy="4.6" r="1.9"/><circle cx="839.7" cy="5.2" r="2.3"/><path d="M838.8 6.5H840.6L840.9 10.1H838.5Z"/><polygon points="860.90,4.80 859.81,5.60 860.44,6.80 859.11,7.04 859.17,8.40 857.86,8.04 857.32,9.28 856.30,8.40 855.28,9.28 854.74,8.04 853.43,8.40 853.49,7.04 852.16,6.80 852.79,5.60 851.70,4.80 852.79,4.00 852.16,2.80 853.49,2.56 853.43,1.20 854.74,1.56 855.28,0.32 856.30,1.20 857.32,0.32 857.86,1.56 859.17,1.20 859.11,2.56 860.44,2.80 859.81,4.00"/><rect x="868.8" y="6" width="2.4" height="4.4"/><rect x="872.2" y="1" width="2.4" height="9.4"/><rect x="875.6" y="3.6" width="2.4" height="6.8"/><path d="M884.1 1.4H887.6L890.3 4.1V10.3H884.1Z"/><path d="M888.2 1.2L889.6 2.6" stroke="#f9f9fa" stroke-width="0.8"/><path d="M889.2 -0.2H892.3L894.7 2.2V8.4H891V3.2L889.2 1.2Z"/><path d="M906.3 0.2C906.9 0.2 907.1 0.9 907.1 1.6V4.4L910.9 7.3V8.1L907.1 6.5V8.4L908.4 9.5V10.2L906.3 9.6L904.2 10.2V9.5L905.5 8.4V6.5L901.7 8.1V7.3L905.5 4.4V1.6C905.5 0.9 905.7 0.2 906.3 0.2Z"/><rect x="917.2" y="0.6" width="6" height="1.5"/><rect x="917.2" y="3.1" width="8.5" height="1.5"/><rect x="917.2" y="5.6" width="6" height="1.5"/><rect x="917.2" y="8.4" width="10.2" height="1.5"/><path d="M940.4 0L935.6 6H938.4L936.8 10.6L942.2 4.2H939.2Z"/><rect x="950" y="0.6" width="10.4" height="1.6"/><rect x="950" y="3.2" width="10.4" height="1.6"/><rect x="950" y="5.8" width="10.4" height="1.6"/><rect x="950" y="8.4" width="10.4" height="1.6"/><path d="M975.3 3.2A4.3 4.3 0 0 0 968.2 3" fill="none" stroke="#108a9d" stroke-width="1.6"/><path d="M977 0.5V4.6H972.9Z"/><path d="M968.7 7.2A4.3 4.3 0 0 0 975.8 7.4" fill="none" stroke="#108a9d" stroke-width="1.6"/><path d="M967 9.9V5.8H971.1Z"/><circle cx="988.5" cy="5.2" r="4.2" fill="none" stroke="#d9262c" stroke-width="1.5"/><path d="M986.7 3.4L990.3 7M990.3 3.4L986.7 7" stroke="#d9262c" stroke-width="1.5"/></g><g transform="translate(19.8,411.9) scale(0.92)"><path d="M6.5 1.2H3A2 2 0 0 0 1 3.2V7.8A2 2 0 0 0 3 9.8H7.6A2 2 0 0 0 9.6 7.8V4.6" fill="none" stroke="#108a9d" stroke-width="1.6"/><path d="M4.2 6.6L8.6 2.2" stroke="#108a9d" stroke-width="1.6"/><rect x="8.5" y="0" width="1.7" height="1.7" fill="#108a9d"/></g><circle cx="393.3" cy="417.7" r="9" fill="none" stroke="#dedede" stroke-width="1"/><circle cx="414.2" cy="417.7" r="9" fill="none" stroke="#dedede" stroke-width="1"/><circle cx="435.1" cy="417.7" r="9" fill="none" stroke="#dedede" stroke-width="1"/><circle cx="456.0" cy="417.7" r="9" fill="none" stroke="#dedede" stroke-width="1"/><circle cx="476.9" cy="417.7" r="9" fill="none" stroke="#dedede" stroke-width="1"/><circle cx="497.8" cy="417.7" r="9" fill="none" stroke="#dedede" stroke-width="1"/><circle cx="518.7" cy="417.7" r="9" fill="none" stroke="#dedede" stroke-width="1"/><circle cx="539.6" cy="417.7" r="9" fill="none" stroke="#dedede" stroke-width="1"/><circle cx="560.5" cy="417.7" r="9" fill="none" stroke="#dedede" stroke-width="1"/><circle cx="581.4" cy="417.7" r="9" fill="none" stroke="#dedede" stroke-width="1"/><circle cx="735.7" cy="417.4" r="9" fill="none" stroke="#dedede" stroke-width="1"/><circle cx="756.7" cy="417.4" r="9" fill="none" stroke="#dedede" stroke-width="1"/><circle cx="777.7" cy="417.4" r="9" fill="none" stroke="#dedede" stroke-width="1"/><g transform="translate(0,411.6)" fill="#108a9d"><circle cx="823" cy="5" r="4.3" fill="none" stroke="#108a9d" stroke-width="1.4"/><path d="M821.6 2.6L825.6 5L821.6 7.4Z"/><circle cx="839.7" cy="2.8" r="2.6"/><circle cx="837.6" cy="4.6" r="1.9"/><circle cx="841.8" cy="4.6" r="1.9"/><circle cx="839.7" cy="5.2" r="2.3"/><path d="M838.8 6.5H840.6L840.9 10.1H838.5Z"/><polygon points="860.90,4.80 859.81,5.60 860.44,6.80 859.11,7.04 859.17,8.40 857.86,8.04 857.32,9.28 856.30,8.40 855.28,9.28 854.74,8.04 853.43,8.40 853.49,7.04 852.16,6.80 852.79,5.60 851.70,4.80 852.79,4.00 852.16,2.80 853.49,2.56 853.43,1.20 854.74,1.56 855.28,0.32 856.30,1.20 857.32,0.32 857.86,1.56 859.17,1.20 859.11,2.56 860.44,2.80 859.81,4.00"/><rect x="868.8" y="6" width="2.4" height="4.4"/><rect x="872.2" y="1" width="2.4" height="9.4"/><rect x="875.6" y="3.6" width="2.4" height="6.8"/><path d="M884.1 1.4H887.6L890.3 4.1V10.3H884.1Z"/><path d="M888.2 1.2L889.6 2.6" stroke="#f9f9fa" stroke-width="0.8"/><path d="M889.2 -0.2H892.3L894.7 2.2V8.4H891V3.2L889.2 1.2Z"/><path d="M906.3 0.2C906.9 0.2 907.1 0.9 907.1 1.6V4.4L910.9 7.3V8.1L907.1 6.5V8.4L908.4 9.5V10.2L906.3 9.6L904.2 10.2V9.5L905.5 8.4V6.5L901.7 8.1V7.3L905.5 4.4V1.6C905.5 0.9 905.7 0.2 906.3 0.2Z"/><rect x="917.2" y="0.6" width="6" height="1.5"/><rect x="917.2" y="3.1" width="8.5" height="1.5"/><rect x="917.2" y="5.6" width="6" height="1.5"/><rect x="917.2" y="8.4" width="10.2" height="1.5"/><path d="M940.4 0L935.6 6H938.4L936.8 10.6L942.2 4.2H939.2Z"/><rect x="950" y="0.6" width="10.4" height="1.6"/><rect x="950" y="3.2" width="10.4" height="1.6"/><rect x="950" y="5.8" width="10.4" height="1.6"/><rect x="950" y="8.4" width="10.4" height="1.6"/><path d="M975.3 3.2A4.3 4.3 0 0 0 968.2 3" fill="none" stroke="#108a9d" stroke-width="1.6"/><path d="M977 0.5V4.6H972.9Z"/><path d="M968.7 7.2A4.3 4.3 0 0 0 975.8 7.4" fill="none" stroke="#108a9d" stroke-width="1.6"/><path d="M967 9.9V5.8H971.1Z"/><circle cx="988.5" cy="5.2" r="4.2" fill="none" stroke="#d9262c" stroke-width="1.5"/><path d="M986.7 3.4L990.3 7M990.3 3.4L986.7 7" stroke="#d9262c" stroke-width="1.5"/></g><g transform="translate(19.8,439.9) scale(0.92)"><path d="M6.5 1.2H3A2 2 0 0 0 1 3.2V7.8A2 2 0 0 0 3 9.8H7.6A2 2 0 0 0 9.6 7.8V4.6" fill="none" stroke="#108a9d" stroke-width="1.6"/><path d="M4.2 6.6L8.6 2.2" stroke="#108a9d" stroke-width="1.6"/><rect x="8.5" y="0" width="1.7" height="1.7" fill="#108a9d"/></g><circle cx="393.3" cy="445.7" r="9" fill="none" stroke="#dedede" stroke-width="1"/><circle cx="414.2" cy="445.7" r="9" fill="none" stroke="#dedede" stroke-width="1"/><circle cx="435.1" cy="445.7" r="9" fill="none" stroke="#dedede" stroke-width="1"/><circle cx="456.0" cy="445.7" r="9" fill="none" stroke="#dedede" stroke-width="1"/><circle cx="476.9" cy="445.7" r="9" fill="none" stroke="#dedede" stroke-width="1"/><circle cx="497.8" cy="445.7" r="9" fill="none" stroke="#dedede" stroke-width="1"/><circle cx="518.7" cy="445.7" r="9" fill="none" stroke="#dedede" stroke-width="1"/><circle cx="539.6" cy="445.7" r="9" fill="none" stroke="#dedede" stroke-width="1"/><circle cx="560.5" cy="445.7" r="9" fill="none" stroke="#dedede" stroke-width="1"/><circle cx="581.4" cy="445.7" r="9" fill="none" stroke="#dedede" stroke-width="1"/><circle cx="735.7" cy="445.4" r="9" fill="none" stroke="#dedede" stroke-width="1"/><circle cx="756.7" cy="445.4" r="9" fill="none" stroke="#dedede" stroke-width="1"/><circle cx="777.7" cy="445.4" r="9" fill="none" stroke="#dedede" stroke-width="1"/><g transform="translate(0,439.6)" fill="#108a9d"><circle cx="823" cy="5" r="4.3" fill="none" stroke="#108a9d" stroke-width="1.4"/><path d="M821.6 2.6L825.6 5L821.6 7.4Z"/><circle cx="839.7" cy="2.8" r="2.6"/><circle cx="837.6" cy="4.6" r="1.9"/><circle cx="841.8" cy="4.6" r="1.9"/><circle cx="839.7" cy="5.2" r="2.3"/><path d="M838.8 6.5H840.6L840.9 10.1H838.5Z"/><polygon points="860.90,4.80 859.81,5.60 860.44,6.80 859.11,7.04 859.17,8.40 857.86,8.04 857.32,9.28 856.30,8.40 855.28,9.28 854.74,8.04 853.43,8.40 853.49,7.04 852.16,6.80 852.79,5.60 851.70,4.80 852.79,4.00 852.16,2.80 853.49,2.56 853.43,1.20 854.74,1.56 855.28,0.32 856.30,1.20 857.32,0.32 857.86,1.56 859.17,1.20 859.11,2.56 860.44,2.80 859.81,4.00"/><rect x="868.8" y="6" width="2.4" height="4.4"/><rect x="872.2" y="1" width="2.4" height="9.4"/><rect x="875.6" y="3.6" width="2.4" height="6.8"/><path d="M884.1 1.4H887.6L890.3 4.1V10.3H884.1Z"/><path d="M888.2 1.2L889.6 2.6" stroke="#f9f9fa" stroke-width="0.8"/><path d="M889.2 -0.2H892.3L894.7 2.2V8.4H891V3.2L889.2 1.2Z"/><path d="M906.3 0.2C906.9 0.2 907.1 0.9 907.1 1.6V4.4L910.9 7.3V8.1L907.1 6.5V8.4L908.4 9.5V10.2L906.3 9.6L904.2 10.2V9.5L905.5 8.4V6.5L901.7 8.1V7.3L905.5 4.4V1.6C905.5 0.9 905.7 0.2 906.3 0.2Z"/><rect x="917.2" y="0.6" width="6" height="1.5"/><rect x="917.2" y="3.1" width="8.5" height="1.5"/><rect x="917.2" y="5.6" width="6" height="1.5"/><rect x="917.2" y="8.4" width="10.2" height="1.5"/><path d="M940.4 0L935.6 6H938.4L936.8 10.6L942.2 4.2H939.2Z"/><rect x="950" y="0.6" width="10.4" height="1.6"/><rect x="950" y="3.2" width="10.4" height="1.6"/><rect x="950" y="5.8" width="10.4" height="1.6"/><rect x="950" y="8.4" width="10.4" height="1.6"/><path d="M975.3 3.2A4.3 4.3 0 0 0 968.2 3" fill="none" stroke="#108a9d" stroke-width="1.6"/><path d="M977 0.5V4.6H972.9Z"/><path d="M968.7 7.2A4.3 4.3 0 0 0 975.8 7.4" fill="none" stroke="#108a9d" stroke-width="1.6"/><path d="M967 9.9V5.8H971.1Z"/><circle cx="988.5" cy="5.2" r="4.2" fill="none" stroke="#d9262c" stroke-width="1.5"/><path d="M986.7 3.4L990.3 7M990.3 3.4L986.7 7" stroke="#d9262c" stroke-width="1.5"/></g><g transform="translate(19.8,467.9) scale(0.92)"><path d="M6.5 1.2H3A2 2 0 0 0 1 3.2V7.8A2 2 0 0 0 3 9.8H7.6A2 2 0 0 0 9.6 7.8V4.6" fill="none" stroke="#108a9d" stroke-width="1.6"/><path d="M4.2 6.6L8.6 2.2" stroke="#108a9d" stroke-width="1.6"/><rect x="8.5" y="0" width="1.7" height="1.7" fill="#108a9d"/></g><circle cx="393.3" cy="473.7" r="9" fill="none" stroke="#dedede" stroke-width="1"/><circle cx="414.2" cy="473.7" r="9" fill="none" stroke="#dedede" stroke-width="1"/><circle cx="435.1" cy="473.7" r="9" fill="none" stroke="#dedede" stroke-width="1"/><circle cx="456.0" cy="473.7" r="9" fill="none" stroke="#dedede" stroke-width="1"/><circle cx="476.9" cy="473.7" r="9" fill="none" stroke="#dedede" stroke-width="1"/><circle cx="497.8" cy="473.7" r="9" fill="none" stroke="#dedede" stroke-width="1"/><circle cx="518.7" cy="473.7" r="9" fill="none" stroke="#dedede" stroke-width="1"/><circle cx="539.6" cy="473.7" r="9" fill="none" stroke="#dedede" stroke-width="1"/><circle cx="560.5" cy="473.7" r="9" fill="none" stroke="#dedede" stroke-width="1"/><circle cx="581.4" cy="473.7" r="9" fill="none" stroke="#dedede" stroke-width="1"/><circle cx="735.7" cy="473.4" r="9" fill="none" stroke="#dedede" stroke-width="1"/><circle cx="756.7" cy="473.4" r="9" fill="none" stroke="#dedede" stroke-width="1"/><circle cx="777.7" cy="473.4" r="9" fill="none" stroke="#dedede" stroke-width="1"/><g transform="translate(0,467.6)" fill="#108a9d"><circle cx="823" cy="5" r="4.3" fill="none" stroke="#108a9d" stroke-width="1.4"/><path d="M821.6 2.6L825.6 5L821.6 7.4Z"/><circle cx="839.7" cy="2.8" r="2.6"/><circle cx="837.6" cy="4.6" r="1.9"/><circle cx="841.8" cy="4.6" r="1.9"/><circle cx="839.7" cy="5.2" r="2.3"/><path d="M838.8 6.5H840.6L840.9 10.1H838.5Z"/><polygon points="860.90,4.80 859.81,5.60 860.44,6.80 859.11,7.04 859.17,8.40 857.86,8.04 857.32,9.28 856.30,8.40 855.28,9.28 854.74,8.04 853.43,8.40 853.49,7.04 852.16,6.80 852.79,5.60 851.70,4.80 852.79,4.00 852.16,2.80 853.49,2.56 853.43,1.20 854.74,1.56 855.28,0.32 856.30,1.20 857.32,0.32 857.86,1.56 859.17,1.20 859.11,2.56 860.44,2.80 859.81,4.00"/><rect x="868.8" y="6" width="2.4" height="4.4"/><rect x="872.2" y="1" width="2.4" height="9.4"/><rect x="875.6" y="3.6" width="2.4" height="6.8"/><path d="M884.1 1.4H887.6L890.3 4.1V10.3H884.1Z"/><path d="M888.2 1.2L889.6 2.6" stroke="#f9f9fa" stroke-width="0.8"/><path d="M889.2 -0.2H892.3L894.7 2.2V8.4H891V3.2L889.2 1.2Z"/><path d="M906.3 0.2C906.9 0.2 907.1 0.9 907.1 1.6V4.4L910.9 7.3V8.1L907.1 6.5V8.4L908.4 9.5V10.2L906.3 9.6L904.2 10.2V9.5L905.5 8.4V6.5L901.7 8.1V7.3L905.5 4.4V1.6C905.5 0.9 905.7 0.2 906.3 0.2Z"/><rect x="917.2" y="0.6" width="6" height="1.5"/><rect x="917.2" y="3.1" width="8.5" height="1.5"/><rect x="917.2" y="5.6" width="6" height="1.5"/><rect x="917.2" y="8.4" width="10.2" height="1.5"/><path d="M940.4 0L935.6 6H938.4L936.8 10.6L942.2 4.2H939.2Z"/><rect x="950" y="0.6" width="10.4" height="1.6"/><rect x="950" y="3.2" width="10.4" height="1.6"/><rect x="950" y="5.8" width="10.4" height="1.6"/><rect x="950" y="8.4" width="10.4" height="1.6"/><path d="M975.3 3.2A4.3 4.3 0 0 0 968.2 3" fill="none" stroke="#108a9d" stroke-width="1.6"/><path d="M977 0.5V4.6H972.9Z"/><path d="M968.7 7.2A4.3 4.3 0 0 0 975.8 7.4" fill="none" stroke="#108a9d" stroke-width="1.6"/><path d="M967 9.9V5.8H971.1Z"/><circle cx="988.5" cy="5.2" r="4.2" fill="none" stroke="#d9262c" stroke-width="1.5"/><path d="M986.7 3.4L990.3 7M990.3 3.4L986.7 7" stroke="#d9262c" stroke-width="1.5"/></g><g transform="translate(19.8,495.9) scale(0.92)"><path d="M6.5 1.2H3A2 2 0 0 0 1 3.2V7.8A2 2 0 0 0 3 9.8H7.6A2 2 0 0 0 9.6 7.8V4.6" fill="none" stroke="#108a9d" stroke-width="1.6"/><path d="M4.2 6.6L8.6 2.2" stroke="#108a9d" stroke-width="1.6"/><rect x="8.5" y="0" width="1.7" height="1.7" fill="#108a9d"/></g><circle cx="393.3" cy="501.7" r="9" fill="none" stroke="#dedede" stroke-width="1"/><circle cx="414.2" cy="501.7" r="9" fill="none" stroke="#dedede" stroke-width="1"/><circle cx="435.1" cy="501.7" r="9" fill="none" stroke="#dedede" stroke-width="1"/><circle cx="456.0" cy="501.7" r="9" fill="none" stroke="#dedede" stroke-width="1"/><circle cx="476.9" cy="501.7" r="9" fill="none" stroke="#dedede" stroke-width="1"/><circle cx="497.8" cy="501.7" r="9" fill="none" stroke="#dedede" stroke-width="1"/><circle cx="518.7" cy="501.7" r="9" fill="none" stroke="#dedede" stroke-width="1"/><circle cx="539.6" cy="501.7" r="9" fill="none" stroke="#dedede" stroke-width="1"/><circle cx="560.5" cy="501.7" r="9" fill="none" stroke="#dedede" stroke-width="1"/><circle cx="581.4" cy="501.7" r="9" fill="none" stroke="#dedede" stroke-width="1"/><circle cx="735.7" cy="501.4" r="9" fill="none" stroke="#dedede" stroke-width="1"/><circle cx="756.7" cy="501.4" r="9" fill="none" stroke="#dedede" stroke-width="1"/><circle cx="777.7" cy="501.4" r="9" fill="none" stroke="#dedede" stroke-width="1"/><g transform="translate(0,495.6)" fill="#108a9d"><circle cx="823" cy="5" r="4.3" fill="none" stroke="#108a9d" stroke-width="1.4"/><path d="M821.6 2.6L825.6 5L821.6 7.4Z"/><circle cx="839.7" cy="2.8" r="2.6"/><circle cx="837.6" cy="4.6" r="1.9"/><circle cx="841.8" cy="4.6" r="1.9"/><circle cx="839.7" cy="5.2" r="2.3"/><path d="M838.8 6.5H840.6L840.9 10.1H838.5Z"/><polygon points="860.90,4.80 859.81,5.60 860.44,6.80 859.11,7.04 859.17,8.40 857.86,8.04 857.32,9.28 856.30,8.40 855.28,9.28 854.74,8.04 853.43,8.40 853.49,7.04 852.16,6.80 852.79,5.60 851.70,4.80 852.79,4.00 852.16,2.80 853.49,2.56 853.43,1.20 854.74,1.56 855.28,0.32 856.30,1.20 857.32,0.32 857.86,1.56 859.17,1.20 859.11,2.56 860.44,2.80 859.81,4.00"/><rect x="868.8" y="6" width="2.4" height="4.4"/><rect x="872.2" y="1" width="2.4" height="9.4"/><rect x="875.6" y="3.6" width="2.4" height="6.8"/><path d="M884.1 1.4H887.6L890.3 4.1V10.3H884.1Z"/><path d="M888.2 1.2L889.6 2.6" stroke="#f9f9fa" stroke-width="0.8"/><path d="M889.2 -0.2H892.3L894.7 2.2V8.4H891V3.2L889.2 1.2Z"/><path d="M906.3 0.2C906.9 0.2 907.1 0.9 907.1 1.6V4.4L910.9 7.3V8.1L907.1 6.5V8.4L908.4 9.5V10.2L906.3 9.6L904.2 10.2V9.5L905.5 8.4V6.5L901.7 8.1V7.3L905.5 4.4V1.6C905.5 0.9 905.7 0.2 906.3 0.2Z"/><rect x="917.2" y="0.6" width="6" height="1.5"/><rect x="917.2" y="3.1" width="8.5" height="1.5"/><rect x="917.2" y="5.6" width="6" height="1.5"/><rect x="917.2" y="8.4" width="10.2" height="1.5"/><path d="M940.4 0L935.6 6H938.4L936.8 10.6L942.2 4.2H939.2Z"/><rect x="950" y="0.6" width="10.4" height="1.6"/><rect x="950" y="3.2" width="10.4" height="1.6"/><rect x="950" y="5.8" width="10.4" height="1.6"/><rect x="950" y="8.4" width="10.4" height="1.6"/><path d="M975.3 3.2A4.3 4.3 0 0 0 968.2 3" fill="none" stroke="#108a9d" stroke-width="1.6"/><path d="M977 0.5V4.6H972.9Z"/><path d="M968.7 7.2A4.3 4.3 0 0 0 975.8 7.4" fill="none" stroke="#108a9d" stroke-width="1.6"/><path d="M967 9.9V5.8H971.1Z"/><circle cx="988.5" cy="5.2" r="4.2" fill="none" stroke="#d9262c" stroke-width="1.5"/><path d="M986.7 3.4L990.3 7M990.3 3.4L986.7 7" stroke="#d9262c" stroke-width="1.5"/></g><g transform="translate(19.8,523.9) scale(0.92)"><path d="M6.5 1.2H3A2 2 0 0 0 1 3.2V7.8A2 2 0 0 0 3 9.8H7.6A2 2 0 0 0 9.6 7.8V4.6" fill="none" stroke="#108a9d" stroke-width="1.6"/><path d="M4.2 6.6L8.6 2.2" stroke="#108a9d" stroke-width="1.6"/><rect x="8.5" y="0" width="1.7" height="1.7" fill="#108a9d"/></g><circle cx="393.3" cy="529.7" r="9" fill="none" stroke="#0b6f0b" stroke-width="2"/><text x="393.3" y="531.7" font-size="5.5" text-anchor="middle" fill="#333" font-family="Liberation Sans">3</text><circle cx="414.2" cy="529.7" r="9" fill="none" stroke="#dedede" stroke-width="1"/><circle cx="435.1" cy="529.7" r="9" fill="none" stroke="#dedede" stroke-width="1"/><circle cx="456.0" cy="529.7" r="9" fill="none" stroke="#dedede" stroke-width="1"/><circle cx="476.9" cy="529.7" r="9" fill="none" stroke="#dedede" stroke-width="1"/><circle cx="497.8" cy="529.7" r="9" fill="none" stroke="#dedede" stroke-width="1"/><circle cx="518.7" cy="529.7" r="9" fill="none" stroke="#dedede" stroke-width="1"/><circle cx="539.6" cy="529.7" r="9" fill="none" stroke="#747474" stroke-width="1.6"/><text x="539.6" y="531.7" font-size="5.5" text-anchor="middle" fill="#333" font-family="Liberation Sans">1</text><circle cx="560.5" cy="529.7" r="9" fill="none" stroke="#a8d8e6" stroke-width="1.3"/><text x="560.5" y="531.7" font-size="5.5" text-anchor="middle" fill="#333" font-family="Liberation Sans">32</text><circle cx="581.4" cy="529.7" r="9" fill="none" stroke="#dedede" stroke-width="1"/><circle cx="735.7" cy="529.4" r="9" fill="none" stroke="#dedede" stroke-width="1"/><circle cx="756.7" cy="529.4" r="9" fill="none" stroke="#22dd22" stroke-width="2"/><text x="756.7" y="531.4" font-size="5.5" text-anchor="middle" fill="#333" font-family="Liberation Sans">3</text><circle cx="777.7" cy="529.4" r="9" fill="none" stroke="#dedede" stroke-width="1"/><circle cx="709" cy="529.2" r="5" fill="#222"/><rect x="708.1" y="528.0" width="1.8" height="4" fill="#fff"/><circle cx="709" cy="526.4000000000001" r="1" fill="#fff"/><g transform="translate(0,523.6)" fill="#108a9d"><circle cx="823" cy="5" r="4.3" fill="none" stroke="#108a9d" stroke-width="1.4"/><path d="M821.6 2.6L825.6 5L821.6 7.4Z"/><circle cx="839.7" cy="2.8" r="2.6"/><circle cx="837.6" cy="4.6" r="1.9"/><circle cx="841.8" cy="4.6" r="1.9"/><circle cx="839.7" cy="5.2" r="2.3"/><path d="M838.8 6.5H840.6L840.9 10.1H838.5Z"/><polygon points="860.90,4.80 859.81,5.60 860.44,6.80 859.11,7.04 859.17,8.40 857.86,8.04 857.32,9.28 856.30,8.40 855.28,9.28 854.74,8.04 853.43,8.40 853.49,7.04 852.16,6.80 852.79,5.60 851.70,4.80 852.79,4.00 852.16,2.80 853.49,2.56 853.43,1.20 854.74,1.56 855.28,0.32 856.30,1.20 857.32,0.32 857.86,1.56 859.17,1.20 859.11,2.56 860.44,2.80 859.81,4.00"/><rect x="868.8" y="6" width="2.4" height="4.4"/><rect x="872.2" y="1" width="2.4" height="9.4"/><rect x="875.6" y="3.6" width="2.4" height="6.8"/><path d="M884.1 1.4H887.6L890.3 4.1V10.3H884.1Z"/><path d="M888.2 1.2L889.6 2.6" stroke="#f9f9fa" stroke-width="0.8"/><path d="M889.2 -0.2H892.3L894.7 2.2V8.4H891V3.2L889.2 1.2Z"/><path d="M906.3 0.2C906.9 0.2 907.1 0.9 907.1 1.6V4.4L910.9 7.3V8.1L907.1 6.5V8.4L908.4 9.5V10.2L906.3 9.6L904.2 10.2V9.5L905.5 8.4V6.5L901.7 8.1V7.3L905.5 4.4V1.6C905.5 0.9 905.7 0.2 906.3 0.2Z"/><rect x="917.2" y="0.6" width="6" height="1.5"/><rect x="917.2" y="3.1" width="8.5" height="1.5"/><rect x="917.2" y="5.6" width="6" height="1.5"/><rect x="917.2" y="8.4" width="10.2" height="1.5"/><path d="M940.4 0L935.6 6H938.4L936.8 10.6L942.2 4.2H939.2Z"/><rect x="950" y="0.6" width="10.4" height="1.6"/><rect x="950" y="3.2" width="10.4" height="1.6"/><rect x="950" y="5.8" width="10.4" height="1.6"/><rect x="950" y="8.4" width="10.4" height="1.6"/><path d="M975.3 3.2A4.3 4.3 0 0 0 968.2 3" fill="none" stroke="#108a9d" stroke-width="1.6"/><path d="M977 0.5V4.6H972.9Z"/><path d="M968.7 7.2A4.3 4.3 0 0 0 975.8 7.4" fill="none" stroke="#108a9d" stroke-width="1.6"/><path d="M967 9.9V5.8H971.1Z"/><circle cx="988.5" cy="5.2" r="4.2" fill="none" stroke="#d9262c" stroke-width="1.5"/><path d="M986.7 3.4L990.3 7M990.3 3.4L986.7 7" stroke="#d9262c" stroke-width="1.5"/></g><path d="M809 168.3L817.2 176.6L814.2 177L815.6 181.2L813.7 182L812.3 177.9L809 180Z" fill="#3a3a42" stroke="#fff" stroke-width="0.6"/></svg>
</body></html>
